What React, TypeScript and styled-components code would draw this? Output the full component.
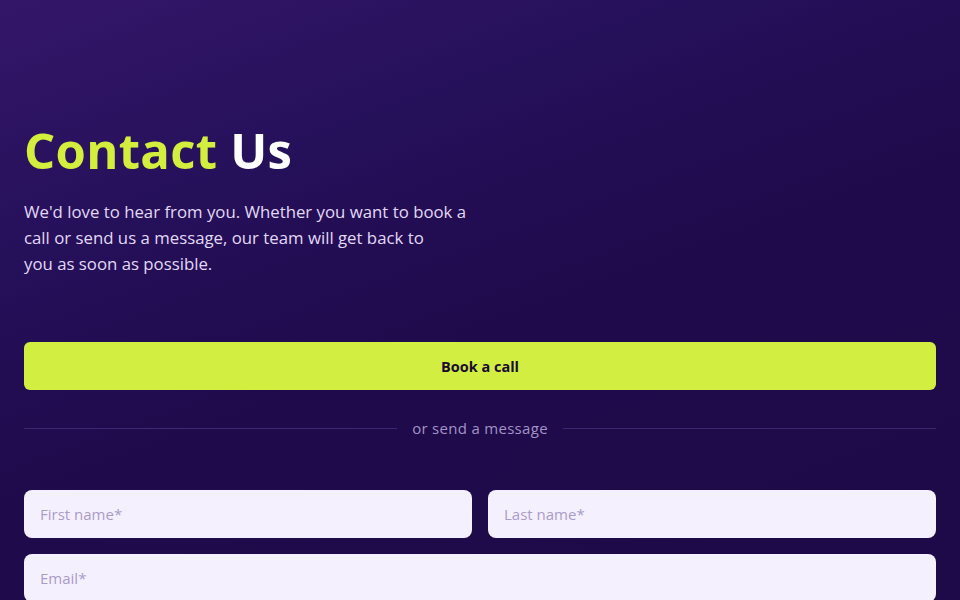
import React from "react";
import styled, { createGlobalStyle } from "styled-components";

const GlobalStyle = createGlobalStyle`
    html, body {
        margin: 0;
        padding: 0;
        background: #1e0a48;
    }
    * {
        box-sizing: border-box;
    }
`;

const Page = styled.div`
    height: 600px;
    padding: 112px 24px 0 24px;
    font-family: "Open Sans", "Noto Sans", sans-serif;
    background: linear-gradient(160deg, #341669 0%, #25105a 28%, #1f0a4b 55%, #1e0a48 100%);
    overflow: hidden;
`;

const Title = styled.h1`
    margin: 0;
    font-size: 49px;
    line-height: 76px;
    font-weight: 700;
    letter-spacing: 0.3px;
    color: #ffffff;
`;

const Accent = styled.span`
    color: #d4ee3d;
`;

const Intro = styled.p`
    margin: 11px 0 0 0;
    font-size: 16.8px;
    line-height: 26px;
    color: #e2d9f7;
    white-space: nowrap;
`;

const BookButton = styled.button`
    display: flex;
    align-items: center;
    justify-content: center;
    width: 100%;
    height: 48px;
    margin-top: 65px;
    border: 0;
    border-radius: 6px;
    background: #d2ef41;
    color: #1a0b33;
    font-family: inherit;
    font-size: 14.5px;
    font-weight: 700;
    cursor: pointer;
`;

const Divider = styled.div`
    display: flex;
    align-items: center;
    gap: 15px;
    height: 76px;
    color: #a294c6;
    font-size: 15px;
    letter-spacing: 0.3px;
`;

const Line = styled.div`
    flex: 1;
    height: 1px;
    background: #3b2870;
`;

const Form = styled.div`
    display: flex;
    flex-direction: column;
    gap: 16px;
    margin-top: 24px;
`;

const Row = styled.div`
    display: grid;
    grid-template-columns: 1fr 1fr;
    gap: 16px;
`;

const Field = styled.input`
    width: 100%;
    height: 48px;
    padding: 0 16px;
    border: 0;
    border-radius: 8px;
    background: #f5f0fe;
    font-family: inherit;
    font-size: 15px;
    color: #1a0b33;
    outline: none;

    &::placeholder {
        color: #a99ccb;
    }
`;

const App: React.FC = () => {
    return (
        <Page>
            <GlobalStyle />
            <Title>
                <Accent>Contact</Accent> Us
            </Title>
            <Intro>
                We'd love to hear from you. Whether you want to book a<br />
                call or send us a message, our team will get back to<br />
                you as soon as possible.
            </Intro>
            <BookButton>Book a call</BookButton>
            <Divider>
                <Line />
                <span>or send a message</span>
                <Line />
            </Divider>
            <Form>
                <Row>
                    <Field type="text" placeholder="First name*" />
                    <Field type="text" placeholder="Last name*" />
                </Row>
                <Field type="email" placeholder="Email*" />
            </Form>
        </Page>
    );
};

export default App;
